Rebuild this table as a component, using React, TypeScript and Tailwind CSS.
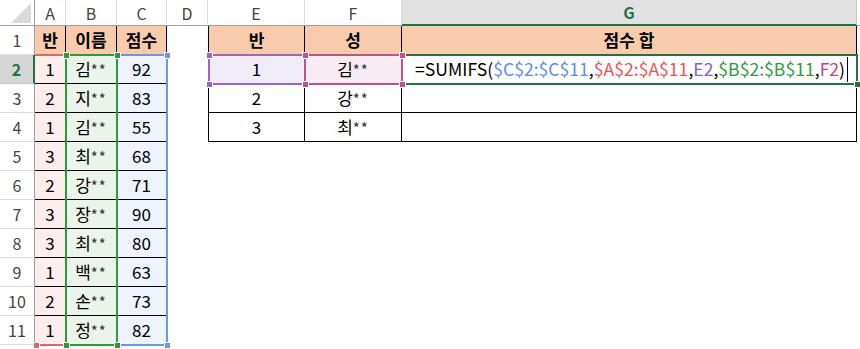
const scores: [number, string, number][] = [
  [1, '김', 92],
  [2, '지', 83],
  [1, '김', 55],
  [3, '최', 68],
  [2, '강', 71],
  [3, '장', 90],
  [3, '최', 80],
  [1, '백', 63],
  [2, '손', 73],
  [1, '정', 82],
];

const summary: [number, string][] = [
  [1, '김'],
  [2, '강'],
  [3, '최'],
];

const letters = ['A', 'B', 'C', 'D', 'E', 'F', 'G'];

const cell = 'flex items-center justify-center text-[17px] text-black';
const tbl = 'border-b border-r border-black';

const Name = ({ ch }: { ch: string }) => (
  <span>
    {ch}
    <span className="text-[15px] tracking-[1px] text-[#333]">**</span>
  </span>
);

// small square grips on the corners of a highlighted range
const Handle = ({ x, y, color }: { x: number; y: number; color: string }) => (
  <div
    className={`absolute h-[7px] w-[7px] border border-white ${color}`}
    style={{ left: x - 3, top: y - 3 }}
  />
);

const Corner = () => (
  <div className="relative border-b border-r border-b-[#9f9f9f] border-r-[#9f9f9f]">
    <svg className="absolute left-0 top-0" width="35" height="26">
      <polygon points="31,3 31,23 11,23" fill="#d9d9d9" />
    </svg>
  </div>
);

const ColHead = ({ label }: { label: string }) =>
  label === 'G' ? (
    <div className="flex items-center justify-center border-b-2 border-r border-b-[#217346] border-r-[#c8c8c8] bg-[#e1e1e1] text-[16px] font-bold text-[#217346]">
      G
    </div>
  ) : (
    <div className="flex items-center justify-center border-b border-r border-b-[#9f9f9f] border-r-[#dcdcdc] text-[16px] text-[#444]">
      {label}
    </div>
  );

const RowHead = ({ n }: { n: number }) =>
  n === 2 ? (
    <div className="flex items-center justify-center border-b border-r-2 border-b-[#c8c8c8] border-r-[#217346] bg-[#d6d6d6] text-[16px] font-bold text-[#217346]">
      2
    </div>
  ) : (
    <div className="flex items-center justify-center border-b border-r border-b-[#dcdcdc] border-r-[#9f9f9f] text-[16px] text-[#444]">
      {n}
    </div>
  );

const Formula = () => (
  <div className="flex items-center pl-[13px] text-[17.6px] text-black">
    <span>=SUMIFS(</span>
    <span className="text-[#5b8def]">$C$2:$C$11</span>
    <span>,</span>
    <span className="text-[#ec5454]">$A$2:$A$11</span>
    <span>,</span>
    <span className="text-[#8e5ac8]">E2</span>
    <span>,</span>
    <span className="text-[#2f9a3c]">$B$2:$B$11</span>
    <span>,</span>
    <span className="text-[#c4458d]">F2</span>
    <span>)</span>
    <span className="ml-[2px] h-[25px] w-px bg-black" />
  </div>
);

export default function App() {
  const rows = [];

  for (let r = 1; r <= 11; r++) {
    const d = r >= 2 ? scores[r - 2] : null;
    const s = r >= 2 && r <= 4 ? summary[r - 2] : null;

    rows.push(<RowHead key={`h${r}`} n={r} />);

    if (r === 1) {
      rows.push(
        <div key="a1" className={`${cell} ${tbl} bg-[#f8cbad] font-bold`}>반</div>,
        <div key="b1" className={`${cell} ${tbl} bg-[#f8cbad] font-bold`}>이름</div>,
        <div key="c1" className={`${cell} ${tbl} bg-[#f8cbad] font-bold`}>점수</div>,
        <div key="d1" />,
        <div key="e1" className={`${cell} ${tbl} border-l bg-[#f8cbad] font-bold`}>반</div>,
        <div key="f1" className={`${cell} ${tbl} bg-[#f8cbad] font-bold`}>성</div>,
        <div key="g1" className={`${cell} ${tbl} bg-[#f8cbad] font-bold`}>점수&nbsp;합</div>,
        <div key="z1" />
      );
      continue;
    }

    rows.push(
      <div key={`a${r}`} className={`${cell} ${tbl} bg-[#fdeeee]`}>{d![0]}</div>,
      <div key={`b${r}`} className={`${cell} ${tbl} bg-[#ebf4ea]`}>
        <Name ch={d![1]} />
      </div>,
      <div key={`c${r}`} className={`${cell} ${tbl} bg-[#eef3fd]`}>{d![2]}</div>,
      <div key={`d${r}`} />
    );

    if (s) {
      rows.push(
        <div key={`e${r}`} className={`${cell} ${tbl} border-l ${r === 2 ? 'bg-[#efecf8]' : ''}`}>
          {s[0]}
        </div>,
        <div key={`f${r}`} className={`${cell} ${tbl} ${r === 2 ? 'bg-[#f8ecf4]' : ''}`}>
          <Name ch={s[1]} />
        </div>,
        r === 2 ? <Formula key="g2" /> : <div key={`g${r}`} className={tbl} />,
        <div key={`z${r}`} />
      );
    } else {
      rows.push(<div key={`e${r}`} />, <div key={`f${r}`} />, <div key={`g${r}`} />, <div key={`z${r}`} />);
    }
  }

  return (
    <div className="relative h-[349px] w-[860px] overflow-hidden bg-white font-['Noto_Sans_CJK_KR',sans-serif]">
      <div className="grid grid-cols-[35px_31px_51px_50px_41px_97px_97px_455px_1fr] grid-rows-[26px_repeat(11,29px)]">
        <Corner />
        {letters.map((l) => (
          <ColHead key={l} label={l} />
        ))}
        <div className="border-b border-b-[#9f9f9f]" />
        {rows}
      </div>

      {/* range highlights drawn over the sheet while the formula is edited */}
      <div className="absolute left-[35px] top-[54px] h-[292px] w-[32px] border-y-2 border-[#e06666]" />
      <div className="absolute left-[116px] top-[54px] h-[292px] w-[52px] border-2 border-[#6d94e8]" />
      <div className="absolute left-[65px] top-[54px] h-[292px] w-[53px] border-2 border-[#2e9a3e]" />
      <div className="absolute left-[208px] top-[54px] h-[31px] w-[98px] border-2 border-[#9a67c9]" />
      <div className="absolute left-[401px] top-[54px] h-[31px] w-[457px] border-2 border-[#217346]" />
      <div className="absolute left-[304px] top-[54px] h-[31px] w-[99px] border-2 border-[#c2508f]" />

      <Handle x={36} y={345} color="bg-[#e06666]" />
      <Handle x={167} y={55} color="bg-[#6d94e8]" />
      <Handle x={167} y={345} color="bg-[#6d94e8]" />
      <Handle x={66} y={55} color="bg-[#2e9a3e]" />
      <Handle x={117} y={55} color="bg-[#2e9a3e]" />
      <Handle x={66} y={345} color="bg-[#2e9a3e]" />
      <Handle x={117} y={345} color="bg-[#2e9a3e]" />
      <Handle x={209} y={55} color="bg-[#9a67c9]" />
      <Handle x={209} y={84} color="bg-[#9a67c9]" />
      <Handle x={305} y={55} color="bg-[#c2508f]" />
      <Handle x={305} y={84} color="bg-[#c2508f]" />
      <Handle x={402} y={55} color="bg-[#c2508f]" />
      <Handle x={402} y={84} color="bg-[#c2508f]" />
      <Handle x={857} y={84} color="bg-[#217346]" />
    </div>
  );
}
